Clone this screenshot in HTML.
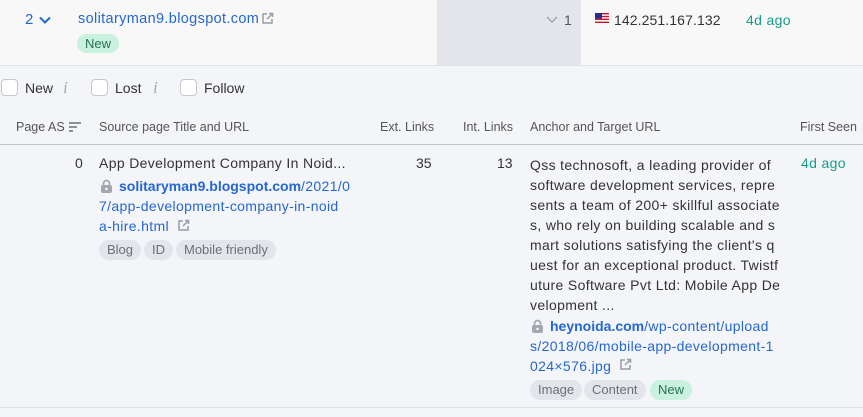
<!DOCTYPE html>
<html><head><meta charset="utf-8"><style>
*{margin:0;padding:0;box-sizing:border-box}
body{width:863px;height:417px;background:#f4f5f9;font-family:"Liberation Sans",sans-serif;font-size:14px;color:#333;position:relative;overflow:hidden}
.a{position:absolute;white-space:nowrap}
.blue{color:#2567d0}
.green{color:#179c8c}
.tag{position:absolute;height:20px;line-height:20px;border-radius:10px;background:#e4e5ea;color:#6c6e79;font-size:13px;padding:0 8px}
.tagn{background:#c8f1df;color:#2a7156}
.cb{position:absolute;width:17px;height:17px;border:1px solid #c4c7cf;border-radius:4px;background:#fff}
.hd{position:absolute;font-size:12.5px;color:#555;white-space:nowrap}
.ln{letter-spacing:0.35px}
b{letter-spacing:0}
.ii{position:absolute;color:#aaa;font-style:italic;font-family:"Liberation Serif",serif;font-size:17px}
</style></head><body>
<div class="a" style="left:0;top:0;width:863px;height:65px;background:#f8f8f8"></div>
<div class="a" style="left:437px;top:0;width:144px;height:65px;background:#e4e5ea"></div>
<div class="a" style="left:0;top:65px;width:863px;height:1px;background:#e2e3e8"></div>

<div class="a blue" style="left:25px;top:11px;font-size:15px">2</div>
<svg class="a" style="left:39px;top:16px" width="12" height="8"><path d="M1 1.5L6 6.5L11 1.5" stroke="#2567d0" stroke-width="2" fill="none"/></svg>
<div class="a blue ln" style="left:78px;top:11px;font-size:14.5px">solitaryman9.blogspot.com</div>
<svg class="a" style="left:261px;top:12px" width="13" height="13"><path d="M6 2H2v9h9V7M8 1.5h3.5V5M11.5 1.5L6 7" stroke="#9a9ca5" stroke-width="1.5" fill="none"/></svg>
<div class="tag tagn" style="left:77px;top:34px;height:19px;line-height:19px">New</div>

<svg class="a" style="left:546px;top:16px" width="12" height="8"><path d="M1 1L6 6L11 1" stroke="#a5a7ae" stroke-width="1.5" fill="none"/></svg>
<div class="a" style="left:564px;top:12px;color:#555">1</div>
<svg class="a" style="left:595px;top:13px" width="14" height="10"><rect width="14" height="10" fill="#fff"/><g fill="#c8102e"><rect y="0" width="14" height="1.4"/><rect y="2.8" width="14" height="1.4"/><rect y="5.6" width="14" height="1.4"/><rect y="8.6" width="14" height="1.4"/></g><rect width="7" height="5.6" fill="#22308a"/></svg>
<div class="a" style="left:614px;top:12px;font-size:14px;letter-spacing:0.1px">142.251.167.132</div>
<div class="a green ln" style="left:746px;top:12px">4d ago</div>

<div class="cb" style="left:1px;top:79px"></div><div class="a" style="left:25px;top:80px">New</div><div class="ii" style="left:63px;top:78px">i</div>
<div class="cb" style="left:91px;top:79px"></div><div class="a" style="left:115px;top:80px">Lost</div><div class="ii" style="left:153px;top:78px">i</div>
<div class="cb" style="left:180px;top:79px"></div><div class="a" style="left:204px;top:80px">Follow</div>

<div class="hd" style="left:16px;top:120px">Page AS</div>
<svg class="a" style="left:69px;top:122px" width="12" height="10"><path d="M0 1h12M0 5h8M0 9h4" stroke="#6c6e79" stroke-width="1.5"/></svg>
<div class="hd" style="left:99px;top:120px">Source page Title and URL</div>
<div class="hd" style="left:380px;top:120px">Ext. Links</div>
<div class="hd" style="left:463px;top:120px">Int. Links</div>
<div class="hd" style="left:530px;top:120px">Anchor and Target URL</div>
<div class="hd" style="left:800px;top:120px">First Seen</div>
<div class="a" style="left:0;top:144px;width:863px;height:1px;background:#c4c6ce"></div>

<div class="a" style="left:75px;top:155px">0</div>
<div class="a ln" style="left:99px;top:155px">App Development Company In Noid...</div>
<svg class="a" style="left:100px;top:179px" width="13" height="15"><rect x="1" y="6" width="11" height="8" rx="2" fill="#a5a7ae"/><path d="M3.5 6V4.5a3 3 0 0 1 6 0V6" stroke="#a5a7ae" stroke-width="1.7" fill="none"/><circle cx="6.5" cy="10" r="1.2" fill="#fff"/></svg>
<div class="a blue ln" style="left:119px;top:178px"><b>solitaryman9.blogspot.com</b>/2021/0</div>
<div class="a blue ln" style="left:99px;top:198px">7/app-development-company-in-noid</div>
<div class="a blue ln" style="left:99px;top:218px">a-hire.html</div>
<svg class="a" style="left:177px;top:219px" width="13" height="13"><path d="M6 2H2v9h9V7M8 1.5h3.5V5M11.5 1.5L6 7" stroke="#9a9ca5" stroke-width="1.5" fill="none"/></svg>
<div class="tag" style="left:99px;top:240px">Blog</div>
<div class="tag" style="left:144px;top:240px">ID</div>
<div class="tag" style="left:176px;top:240px">Mobile friendly</div>

<div class="a" style="left:416px;top:155px">35</div>
<div class="a" style="left:497px;top:155px">13</div>

<div class="a ln" style="left:530px;top:155px;line-height:20px">Qss technosoft, a leading provider of<br>software development services, repre<br>sents a team of 200+ skillful associate<br>s, who rely on building scalable and s<br>mart solutions satisfying the client's q<br>uest for an exceptional product. Twistf<br>uture Software Pvt Ltd: Mobile App De<br>velopment ...</div>
<svg class="a" style="left:531px;top:319px" width="13" height="15"><rect x="1" y="6" width="11" height="8" rx="2" fill="#a5a7ae"/><path d="M3.5 6V4.5a3 3 0 0 1 6 0V6" stroke="#a5a7ae" stroke-width="1.7" fill="none"/><circle cx="6.5" cy="10" r="1.2" fill="#fff"/></svg>
<div class="a blue ln" style="left:550px;top:318px"><b>heynoida.com</b>/wp-content/upload</div>
<div class="a blue ln" style="left:530px;top:338px">s/2018/06/mobile-app-development-1</div>
<div class="a blue ln" style="left:530px;top:358px">024×576.jpg</div>
<svg class="a" style="left:619px;top:358px" width="13" height="13"><path d="M6 2H2v9h9V7M8 1.5h3.5V5M11.5 1.5L6 7" stroke="#9a9ca5" stroke-width="1.5" fill="none"/></svg>
<div class="tag" style="left:530px;top:380px">Image</div>
<div class="tag" style="left:584px;top:380px">Content</div>
<div class="tag tagn" style="left:650px;top:380px">New</div>
<div class="a green ln" style="left:801px;top:155px">4d ago</div>

<div class="a" style="left:0;top:407px;width:863px;height:1px;background:#e0e1e6"></div>
</body></html>
